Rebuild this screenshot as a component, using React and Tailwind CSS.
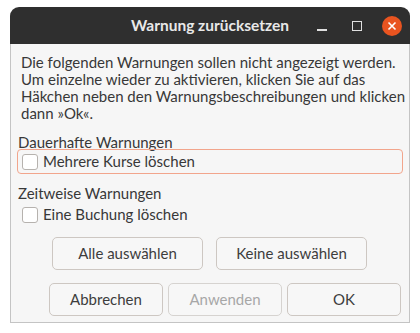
import React from "react";

function Check() {
  return <span className="inline-block w-[16px] h-[16px] rounded-[3px] border border-[#b6b2ae] bg-white shrink-0" />;
}

function Btn({ children, className = "", disabled }) {
  return (
    <div
      className={
        "flex items-center justify-center h-[33px] rounded-[5px] border bg-[#f7f7f7] " +
        (disabled ? "border-[#d6d3d0] text-[#a7a7a7] " : "border-[#cdc7c2] text-[#3d3d3d] ") +
        className
      }
    >
      {children}
    </div>
  );
}

export default function App() {
  return (
    <div
      className="w-[420px] h-[333px] bg-white pt-[7px] pl-[10px] overflow-hidden"
      style={{ fontFamily: 'Lato, "Noto Sans", sans-serif' }}
    >
      <div className="w-[400px] h-[316px] flex flex-col">
        <div className="h-[37px] shrink-0 bg-[#2f2f2f] rounded-t-[9px] flex items-center relative">
          <div className="absolute inset-0 flex items-center justify-center text-[15.5px] font-bold text-[#e8e8e8]">
            Warnung zurücksetzen
          </div>
          <div className="ml-auto flex items-center relative">
            <div className="w-[10px] h-[2px] bg-[#e0e0e0] mt-[8px] mr-[25px]" />
            <div className="w-[10px] h-[10px] border-[1.5px] border-[#e0e0e0] mr-[20px]" />
            <div className="w-[20px] h-[20px] rounded-full bg-[#e95420] flex items-center justify-center mr-[8px]">
              <svg width="10" height="10" viewBox="0 0 10 10">
                <path d="M1.5 1.5 L8.5 8.5 M8.5 1.5 L1.5 8.5" stroke="#fff" strokeWidth="1.6" />
              </svg>
            </div>
          </div>
        </div>
        <div className="flex-1 bg-[#f6f6f6] border border-t-0 border-[#c4c4c4] flex flex-col text-[15px] text-[#383838]">
          <div className="pl-[10px] pt-[10px] leading-[17px] whitespace-nowrap">
            <div>Die folgenden Warnungen sollen nicht angezeigt werden.</div>
            <div>Um einzelne wieder zu aktivieren, klicken Sie auf das</div>
            <div>Häkchen neben den Warnungsbeschreibungen und klicken</div>
            <div>dann »Ok«.</div>
          </div>
          <div className="pl-[7px] mt-[12px] leading-[17px]">Dauerhafte Warnungen</div>
          <div className="mx-[6px] mt-[-2px] h-[25px] border-[1.5px] border-[#f2a58c] rounded-[4px] flex items-center gap-[5px] pl-[4px] leading-[17px]">
            <Check />
            <span>Mehrere Kurse löschen</span>
          </div>
          <div className="pl-[7px] mt-[11px] leading-[17px]">Zeitweise Warnungen</div>
          <div className="mx-[6px] h-[25px] flex items-center gap-[5px] pl-[5px] leading-[17px]">
            <Check />
            <span>Eine Buchung löschen</span>
          </div>
          <div className="flex mt-[10px] pl-[41px] gap-[13px]">
            <Btn className="w-[151px]">Alle auswählen</Btn>
            <Btn className="w-[151px]">Keine auswählen</Btn>
          </div>
          <div className="flex mt-[13px] pl-[38px] gap-[5px]">
            <Btn className="w-[114px]">Abbrechen</Btn>
            <Btn className="w-[114px]" disabled>Anwenden</Btn>
            <Btn className="w-[114px]">OK</Btn>
          </div>
        </div>
      </div>
    </div>
  );
}
